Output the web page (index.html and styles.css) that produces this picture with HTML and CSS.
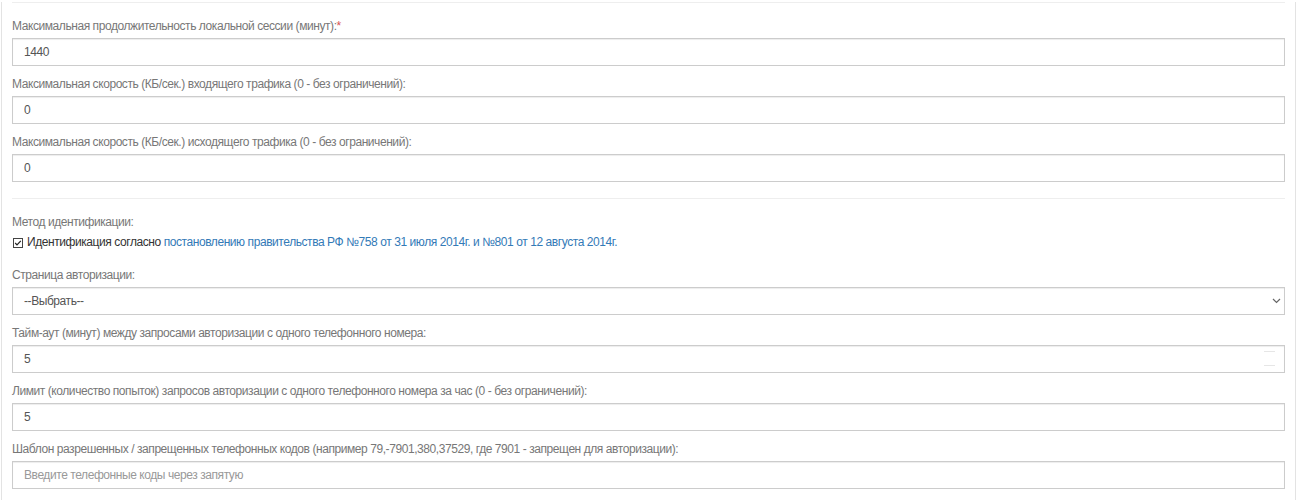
FILE: index.html
```html
<!DOCTYPE html>
<html lang="ru">
<head>
    <meta charset="UTF-8">
    <title>Настройки сессии</title>
    <link rel="stylesheet" href="styles.css">
</head>
<body>

<div class="panel">
    <hr class="sep first">

    <div class="form-group">
        <label>Максимальная продолжительность локальной сессии (минут):<span class="req">*</span></label>
        <input type="text" class="form-control" value="1440">
    </div>
    <div class="form-group">
        <label>Максимальная скорость (КБ/сек.) входящего трафика (0 - без ограничений):</label>
        <input type="text" class="form-control" value="0">
    </div>
    <div class="form-group">
        <label>Максимальная скорость (КБ/сек.) исходящего трафика (0 - без ограничений):</label>
        <input type="text" class="form-control" value="0">
    </div>

    <hr class="sep second">

    <div class="form-group">
        <label>Метод идентификации:</label>
        <div class="check-line">
            <!-- галочка -->
            <svg class="check-box" width="10" height="10" viewBox="0 0 10 10"><rect x="0.5" y="0.5" width="9" height="9" fill="#fff" stroke="#444"/><path d="M2.2 5l1.8 1.9L7.8 2.8" fill="none" stroke="#222" stroke-width="1.2"/></svg>
            <span>Идентификация согласно <a href="#">постановлению правительства РФ №758 от 31 июля 2014г. и №801 от 12 августа 2014г.</a></span>
        </div>
    </div>
    <div class="form-group">
        <label>Страница авторизации:</label>
        <div class="select-wrap">
            <select class="form-control">
                <option>--Выбрать--</option>
            </select>
            <svg class="chevron" width="9" height="6" viewBox="0 0 9 6"><path d="M1 1l3.5 3.5L8 1" fill="none" stroke="#666" stroke-width="1.2"/></svg>
        </div>
    </div>
    <div class="form-group">
        <label>Тайм-аут (минут) между запросами авторизации с одного телефонного номера:</label>
        <div class="number-wrap">
            <input type="text" class="form-control" value="5">
            <span class="spin"></span>
        </div>
    </div>
    <div class="form-group">
        <label>Лимит (количество попыток) запросов авторизации с одного телефонного номера за час (0 - без ограничений):</label>
        <input type="text" class="form-control" value="5">
    </div>
    <div class="form-group">
        <label>Шаблон разрешенных / запрещенных телефонных кодов (например 79,-7901,380,37529, где 7901 - запрещен для авторизации):</label>
        <input type="text" class="form-control" placeholder="Введите телефонные коды через запятую">
    </div>
</div>

</body>
</html>
```

FILE: styles.css
```css
body {
    margin: 0;
    font-family: "Liberation Sans", Arial, sans-serif;
    font-size: 12px;
    letter-spacing: -0.43px;
    color: #333;
    background: #fff;
}
.panel {
    margin-left: 1px;
    width: 1295px;
    box-sizing: border-box;
    border-left: 1px solid #e3e3e3;
    border-right: 1px solid #e3e3e3;
    padding: 0 10px 20px;
}
.sep {
    border: 0;
    border-top: 1px solid #eee;
    margin: 0 0 15px;
}
.sep.first {
    margin-top: 2px;
}
.sep.second {
    margin-top: 16px;
}
.form-group {
    margin-bottom: 10px;
}
label {
    display: block;
    color: #777;
    line-height: 16px;
    margin-bottom: 4px;
}
.req {
    color: #d9534f;
}
.form-control {
    display: block;
    width: 100%;
    height: 28px;
    box-sizing: border-box;
    padding: 0 11px;
    font-family: "Liberation Sans", Arial, sans-serif;
    font-size: 12px;
    letter-spacing: -0.43px;
    color: #555;
    background: #fff;
    border: 1px solid #ccc;
    border-radius: 0;
    box-shadow: inset 0 1px 1px rgba(0, 0, 0, .075);
    outline: none;
}
.form-control::placeholder {
    color: #999;
}
.check-line {
    display: flex;
    align-items: center;
    gap: 4px;
    color: #333;
    line-height: 17px;
    margin-bottom: 16px;
}
.check-box {
    margin-left: 1px;
    flex: none;
}
.check-line a {
    color: #337ab7;
    text-decoration: none;
}
.select-wrap, .number-wrap {
    position: relative;
}
select.form-control {
    appearance: none;
    -webkit-appearance: none;
}
.chevron {
    position: absolute;
    right: 4px;
    top: 11px;
}
.spin {
    position: absolute;
    right: 10px;
    top: 6px;
    width: 11px;
    height: 13px;
    border-top: 1px solid #e6e6e6;
    border-bottom: 1px solid #e6e6e6;
}
```
